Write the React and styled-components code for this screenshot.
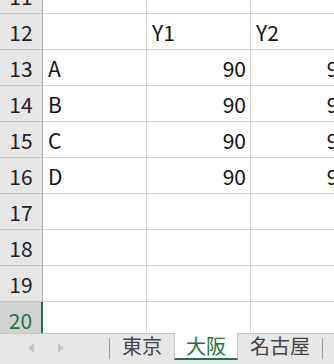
import React from 'react'
import styled, { createGlobalStyle } from 'styled-components'

const GlobalStyle = createGlobalStyle`
    html, body {
        margin: 0;
        padding: 0;
        background: #ffffff;
    }
    body {
        font-family: 'Noto Sans CJK JP', 'Noto Sans', sans-serif;
    }
`

const rows = [
    { n: 11, cells: ['', '', ''] },
    { n: 12, cells: ['', 'Y1', 'Y2'] },
    { n: 13, cells: ['A', '90', '90'] },
    { n: 14, cells: ['B', '90', '90'] },
    { n: 15, cells: ['C', '90', '90'] },
    { n: 16, cells: ['D', '90', '90'] },
    { n: 17, cells: ['', '', ''] },
    { n: 18, cells: ['', '', ''] },
    { n: 19, cells: ['', '', ''] },
    { n: 20, cells: ['', '', ''], selected: true },
]

const sheets = ['東京', '大阪', '名古屋']

export default () => {
    return (
        <>
        <GlobalStyle />
        <Window>
            <Sheet>
                <Rows>
                    {rows.map(r => (
                        <Row key={r.n}>
                            <RowHead $selected={r.selected}>{r.n}</RowHead>
                            {r.cells.map((c, i) => (
                                <Cell key={i} $num={/^\d+$/.test(c)}>{c}</Cell>
                            ))}
                        </Row>
                    ))}
                </Rows>
            </Sheet>
            <TabBar>
                <Nav>
                    <Arrow>
                        <svg width="8" height="12" viewBox="0 0 8 12"><path d="M7 1 L1 6 L7 11 Z" fill="#c4c4c4" /></svg>
                    </Arrow>
                    <Arrow>
                        <svg width="8" height="12" viewBox="0 0 8 12"><path d="M1 1 L7 6 L1 11 Z" fill="#c4c4c4" /></svg>
                    </Arrow>
                </Nav>
                <Divider />
                {sheets.map(s => (
                    <Tab key={s} $active={s === '大阪'}>{s}</Tab>
                ))}
                <Divider />
            </TabBar>
        </Window>
        </>
    )
}

const Window = styled.div`
    width: 334px;
    height: 364px;
    display: flex;
    flex-direction: column;
    overflow: hidden;
    background: #ffffff;
`

const Sheet = styled.div`
    height: 333px;
    overflow: hidden;
    flex-shrink: 0;
`

const Rows = styled.div`
    margin-top: -22px;
    display: flex;
    flex-direction: column;
`

const Row = styled.div`
    display: flex;
    height: 36px;
    flex-shrink: 0;
    overflow: hidden;
`

const RowHead = styled.div`
    width: 43px;
    flex-shrink: 0;
    display: flex;
    align-items: center;
    justify-content: center;
    box-sizing: border-box;
    background: ${p => p.$selected ? '#d2d2d2' : '#e6e6e6'};
    color: ${p => p.$selected ? '#217346' : '#222222'};
    border-bottom: 1px solid #c6c6c6;
    border-right: ${p => p.$selected ? '2px solid #217346' : '1px solid #ababab'};
    font-size: 21px;
    padding-top: 1px;
`

const Cell = styled.div`
    width: 104px;
    flex-shrink: 0;
    box-sizing: border-box;
    border-bottom: 1px solid #d4d4d4;
    border-right: 1px solid #d4d4d4;
    display: flex;
    align-items: center;
    justify-content: ${p => p.$num ? 'flex-end' : 'flex-start'};
    padding: 1px 4px 0 5px;
    font-size: 21px;
    color: #111111;
    white-space: nowrap;
`

const TabBar = styled.div`
    flex: 1;
    display: flex;
    align-items: flex-start;
    background: #e6e6e6;
    border-top: 1px solid #c6c6c6;
`

const Nav = styled.div`
    width: 109px;
    display: flex;
    align-items: center;
    gap: 22px;
    padding-left: 27px;
    box-sizing: border-box;
    height: 27px;
`

const Arrow = styled.span`
    display: flex;
    align-items: center;
`

const Divider = styled.div`
    width: 1px;
    height: 21px;
    margin-top: 4px;
    background: #9a9a9a;
`

const Tab = styled.div`
    height: 27px;
    box-sizing: border-box;
    padding: 0 11px;
    display: flex;
    align-items: center;
    font-size: 20px;
    color: ${p => p.$active ? '#217346' : '#444444'};
    background: ${p => p.$active ? '#ffffff' : 'transparent'};
    border-bottom: 2px solid ${p => p.$active ? '#217346' : 'transparent'};
    border-left: 1px solid ${p => p.$active ? '#c6c6c6' : 'transparent'};
    border-right: 1px solid ${p => p.$active ? '#c6c6c6' : 'transparent'};
    margin-top: -1px;
    line-height: 1;
`
